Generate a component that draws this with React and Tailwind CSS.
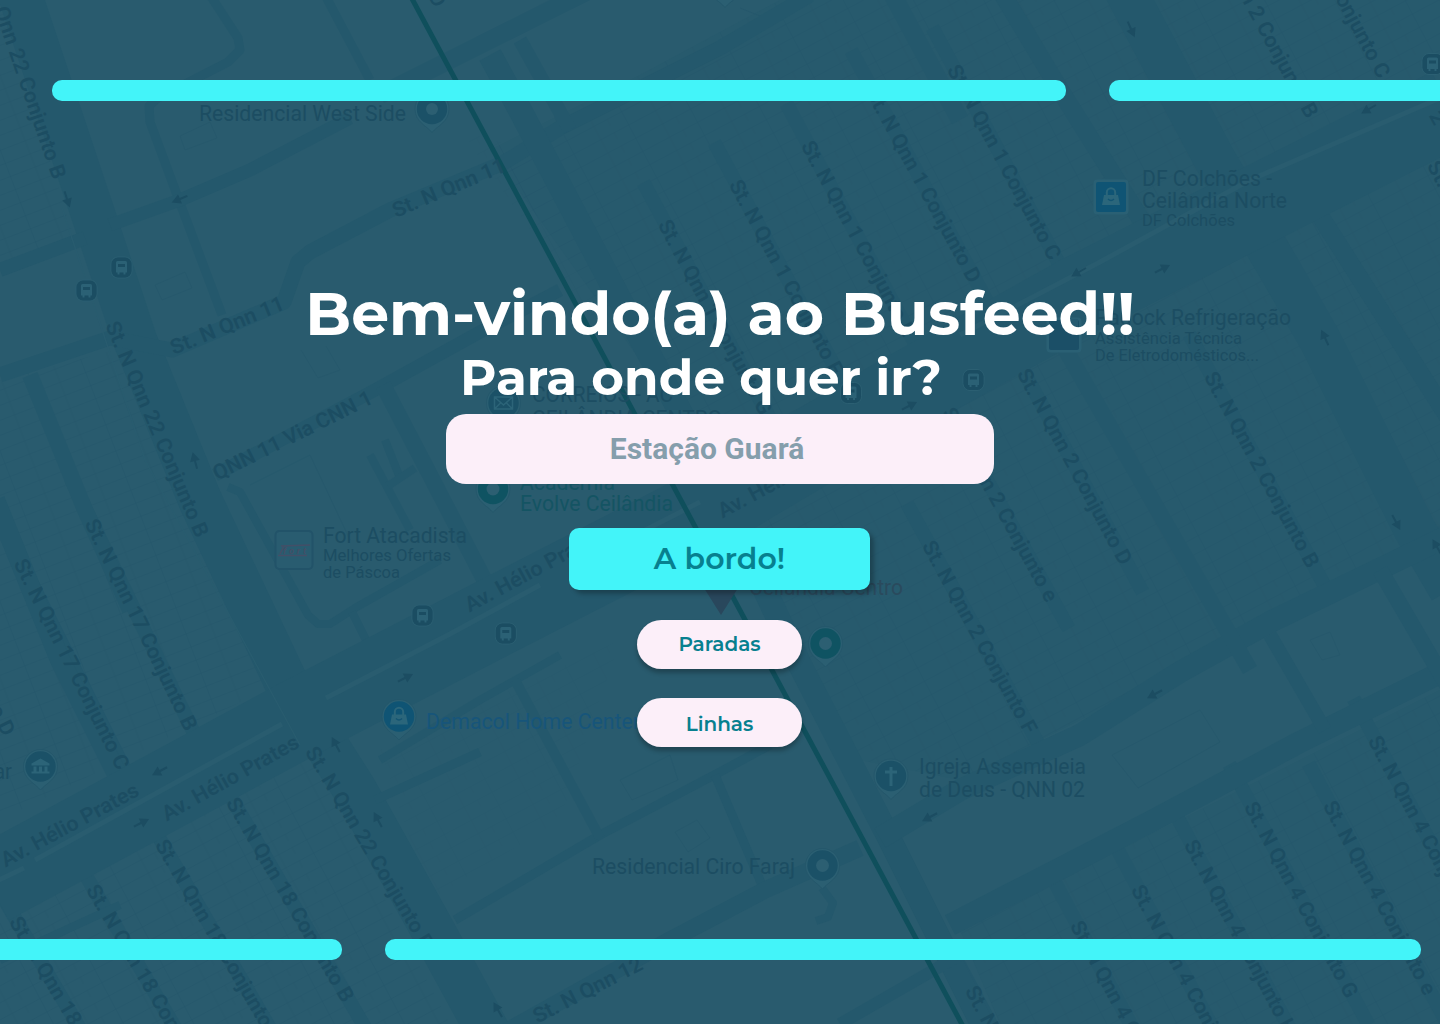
import React from "react";

const BLOCK = "#295b6e";
const ROAD = "#24586c";
const INK = "#1c4d62";
const PIN = "#1b5167";

// [points, width]
const ROADS = [
  ["15,-20 75,160 135,340 200,500 285,680 355,790 430,925 490,1035", 44],
  ["0,270 85,238", 14],
  ["210,-5 238,38 240,50 228,62 158,98 149,106 150,122 180,203 222,315", 9],
  ["325,-5 370,80", 9],
  ["110,225 180,200 250,170 350,118", 13],
  ["0,375 110,338 172,350 284,302 298,262 310,252 390,210 503,163 560,128 640,88 720,48 810,-5", 15],
  ["380,95 480,45 590,-10", 18],
  ["490,55 520,110 620,300 690,430 800,665 885,830 985,1030", 24],
  ["520,40 570,130", 14],
  ["1125,-10 1215,160 1280,270 1320,340 1415,530 1450,590", 42],
  ["1000,-10 1060,90 1160,250", 18],
  ["890,-10 960,120", 18],
  ["215,475 375,390 480,332 560,290", 13],
  ["383,385 430,475 500,610", 16],
  ["228,487 240,492 308,615 318,624 330,624 355,608 440,560", 8],
  ["370,455 410,530", 8],
  ["385,440 400,478", 8],
  ["388,486 415,468", 8],
  ["352,612 366,640", 8],
  ["30,375 85,510 130,610", 16],
  ["-5,500 60,660 130,800", 20],
  ["375,800 480,752", 9],
  ["455,920 600,835 720,772 770,745", 9],
  ["380,760 480,700 560,655", 8],
  ["515,680 600,838", 10],
  ["715,775 765,892", 9],
  ["500,1035 670,940 765,890 860,848", 17],
  ["822,888 833,903 828,917 816,921", 8],
  ["840,1024 960,955", 12],
  ["880,838 960,790 1080,735 1180,672 1270,622 1450,535", 22],
  ["950,925 1150,822 1300,742 1450,668", 22],
  ["1270,635 1325,730", 14],
  ["1380,570 1450,690", 16],
  ["1310,200 1450,420", 18],
  ["1060,340 1250,670", 16],
  ["0,960 120,905", 8],
];

// Street names written along their road: [x1, y1, x2, y2, name, draws its own road]
const STREETS = [
  [664, 221, 767, 413, "St. N Qnn 1 Conjunto G", 1],
  [735, 181, 838, 373, "St. N Qnn 1 Conjunto F", 1],
  [807, 142, 910, 334, "St. N Qnn 1 Conjunto E", 1],
  [872, 89, 976, 281, "St. N Qnn 1 Conjunto D", 1],
  [953, 66, 1056, 258, "St. N Qnn 1 Conjunto C", 1],
  [1208, -78, 1313, 116, "St. N Qnn 2 Conjunto B", 0],
  [1281, -118, 1385, 76, "St. N Qnn 2 Conjunto C", 0],
  [1435, 112, 1441, 123, "2", 0],
  [1433, 162, 1536, 354, "St. N Qnn 4 Conjunto B", 0],
  [338, -187, 441, 5, "St. N Qnn 11 Conjunto D", 0],
  [1023, 370, 1127, 563, "St. N Qnn 2 Conjunto D", 1],
  [1210, 373, 1314, 566, "St. N Qnn 2 Conjunto B", 1],
  [948, 409, 1053, 600, "St. N Qnn 2 Conjunto e", 1],
  [928, 542, 1032, 732, "St. N Qnn 2 Conjunto F", 1],
  [-16, -43, 60, 178, "St. N Qnn 22 Conjunto B", 0],
  [112, 322, 203, 536, "St. N Qnn 22 Conjunto B", 0],
  [91, 520, 192, 729, "St. N Qnn 17 Conjunto B", 1],
  [20, 560, 124, 768, "St. N Qnn 17 Conjunto C", 1],
  [-97, 524, 10, 734, "St. N Qnn 17 Conjunto D", 0],
  [311, 748, 429, 947, "St. N Qnn 22 Conjunto B", 0],
  [232, 799, 349, 1000, "St. N Qnn 18 Conjunto B", 1],
  [161, 841, 278, 1042, "St. N Qnn 18 Conjunto C", 1],
  [92, 886, 210, 1087, "St. N Qnn 18 Conjunto D", 1],
  [15, 918, 133, 1119, "St. N Qnn 18 Conjunto e", 1],
  [1374, 737, 1476, 928, "St. N Qnn 4 Conjunto D", 1],
  [1250, 803, 1353, 996, "St. N Qnn 4 Conjunto G", 1],
  [1329, 802, 1431, 993, "St. N Qnn 4 Conjunto e", 1],
  [1190, 841, 1292, 1033, "St. N Qnn 4 Conjunto H", 1],
  [1137, 886, 1239, 1077, "St. N Qnn 4 Conjunto I", 1],
  [1076, 922, 1178, 1113, "St. N Qnn 4 Conjunto J", 1],
  [971, 987, 1073, 1178, "St. N Qnn 4 Conjunto L", 1],
  [2, 861, 137, 788, "Av. Hélio Prates", 0],
  [163, 815, 297, 740, "Av. Hélio Prates", 0],
  [466, 606, 601, 533, "Av. Hélio Prates", 0],
  [719, 512, 854, 439, "Av. Hélio Prates", 0],
  [393, 211, 504, 164, "St. N Qnn 11", 0],
  [171, 348, 283, 302, "St. N Qnn 11", 0],
  [214, 474, 371, 396, "QNN 11 Via CNN 1", 0],
  [534, 1017, 641, 962, "St. N Qnn 12", 0],
];

// [x, baseline, width, size, text, colour]
const PLACES = [
  [199, 121, 207, 21.5, "Residencial West Side", INK],
  [1142, 186, 130, 21.5, "DF Colchões -", INK],
  [1142, 208, 145, 21.5, "Ceilândia Norte", INK],
  [1142, 226, 93, 16.5, "DF Colchões", INK],
  [1095, 325, 196, 21.5, "Padock Refrigeração", INK],
  [1095, 344, 147, 16.5, "Assistência Técnica", INK],
  [1095, 361, 164, 16.5, "De Eletrodomésticos...", INK],
  [532, 402, 141, 21.5, "CORREIOS - AC", INK],
  [532, 426, 190, 21.5, "CEILÂNDIA CENTRO", INK],
  [520, 490, 95, 21.5, "Academia", "#145463"],
  [520, 511, 153, 21.5, "Evolve Ceilândia", "#145463"],
  [323, 543, 144, 21.5, "Fort Atacadista", INK],
  [323, 561, 128, 16.5, "Melhores Ofertas", INK],
  [323, 578, 77, 16.5, "de Páscoa", INK],
  [749, 595, 154, 21.5, "Ceilândia Centro", "#2a4a5d"],
  [426, 729, 214, 21.5, "Demacol Home Center", "#17557a"],
  [919, 774, 167, 21.5, "Igreja Assembleia", INK],
  [919, 797, 166, 21.5, "de Deus - QNN 02", INK],
  [592, 874, 203, 21.5, "Residencial Ciro Faraj", INK],
  [-6, 779, 18, 21.5, "ar", INK],
];

const BUS_STOPS = [[121.5, 267.5], [86.5, 290.5], [422.5, 615.5], [505.8, 633.5], [973.5, 380], [851, 393], [1432.5, 64]];

// [x, y, angle]
const ARROWS = [
  [67, 199, 72], [180, 199, 157], [1131, 29, 66], [1369, 109, 150], [1079, 272, 150],
  [1162, 269, -27], [1325, 338, 245], [1396, 522, 62], [1437, 547, 240], [195, 461, 255],
  [405, 678, -27], [160, 771, 152], [141, 823, -27], [336, 745, 242], [378, 820, 242],
  [1155, 694, 152], [930, 817, 152], [909, 406, -27], [498, 1010, 240],
];

function Pin({ x, y, fill = PIN, children }) {
  return (
    <g transform={`translate(${x} ${y})`}>
      <path d="M0 23.500C-5 17-17 13-17 0A17 17 0 1 1 17 0C17 13 5 17 0 23.500Z" fill="#2b5f72" stroke="#235569" strokeWidth="0.8" />
      <circle r="15.2" fill={fill} />
      {children}
    </g>
  );
}

function Bag() {
  return (
    <g>
      <path d="M-7-2H7L9 8H-9Z" fill="#2b667b" />
      <path d="M-4.200-1V-4.500a4.200 4.200 0 0 1 8.400 0V-1" fill="none" stroke="#2b667b" strokeWidth="2" />
      <path d="M-3 2Q0 5 3 2" fill="none" stroke="#125472" strokeWidth="1.4" />
    </g>
  );
}

function CityMap() {
  return (
    <svg aria-hidden="true" className="absolute inset-0 h-full w-full" viewBox="0 0 1440 1024" fontFamily="Roboto, sans-serif">
      <defs>
        <pattern id="lots" width="62" height="15" patternUnits="userSpaceOnUse" patternTransform="rotate(-28)">
          <path d="M0 .5H62M.5 0V15M31 0V15M46 0V8" fill="none" stroke="#23556a" strokeWidth="1" opacity="0.38" />
        </pattern>
        <pattern id="lotsWest" width="54" height="14" patternUnits="userSpaceOnUse" patternTransform="rotate(-21)">
          <path d="M0 .5H54M.5 0V14M27 0V14" fill="none" stroke="#23556a" strokeWidth="1" opacity="0.38" />
        </pattern>
      </defs>
      <rect width="1440" height="1024" fill={BLOCK} />
      <path d="M490 150 640 75 780 0H1440V530L1180 670 960 780 860 760 690 430Z" fill="#275a6d" />
      <path d="M960 930 1440 690V1024H1000Z" fill="#275a6d" />
      <path d="M490 150 640 75 780 0H1440V530L1180 670 960 780 860 760 690 430Z" fill="url(#lots)" />
      <path d="M960 930 1440 690V1024H1000Z" fill="url(#lots)" />
      <path d="M0 0 75 240 0 265ZM0 380 115 350 265 690 0 820Z" fill="url(#lotsWest)" />
      <path d="M0 920 310 755 450 1024H0Z" fill="url(#lots)" />
      <path d="M460 130 560 160 640 330 600 330ZM380 750 620 640 560 820 430 900Z" fill="url(#lots)" opacity="0.45" />
      <g fill="none" stroke="#24566a" opacity="0.6">
        <path d="M180 136 210 122 217 138 185 150ZM155 285 185 272 192 288 162 300ZM301 350 318 378 340 370 326 346M620 780 670 755 678 780 632 800ZM675 832 697 820 710 838 688 852ZM1112 755 1200 710 1220 742 1138 788ZM1310 640 1330 632 1340 655 1322 660ZM740 8 770 20 775 8M250 485 310 455 350 540" />
      </g>
      <g fill="none" stroke={ROAD} strokeLinejoin="round">
        {STREETS.filter((s) => s[5]).map(([x1, y1, x2, y2], i) => (
          <line key={i} x1={x1 - (x2 - x1) * 0.2} y1={y1 - (y2 - y1) * 0.2} x2={x2 + (x2 - x1) * 0.15} y2={y2 + (y2 - y1) * 0.15} strokeWidth="14" />
        ))}
        {ROADS.map(([points, width], i) => (
          <polyline key={i} points={points} strokeWidth={width} />
        ))}
        <polyline points="-10,885 300,718 480,625 720,502 900,395 1080,295 1450,108" strokeWidth="80" />
      </g>
      <g fill="none" stroke="#295c6f" strokeWidth="5">
        <path d="M-5 882 24 868M35 860 282 724M326 698 450 634 540 585M575 566 700 502M960 335 1100 262 1250 180 1440 98" />
        <path d="M62 208 145 460 300 745" strokeWidth="1.2" />
      </g>
      <path d="M410-5 965 1030" stroke="#0f4f5c" strokeWidth="5" />
      <g fill={INK} fontWeight="600">
        {STREETS.map(([x1, y1, x2, y2, name], i) => (
          <text
            key={i}
            fontSize="21"
            dy="7.5"
            textLength={Math.hypot(x2 - x1, y2 - y1)}
            lengthAdjust="spacingAndGlyphs"
            transform={`translate(${x1} ${y1}) rotate(${(Math.atan2(y2 - y1, x2 - x1) * 180) / Math.PI})`}
          >
            {name}
          </text>
        ))}
      </g>
      {ARROWS.map(([x, y, a], i) => (
        <path key={i} d="M-8-1H0V-5L9 0 0 5V1H-8Z" fill={INK} transform={`translate(${x} ${y}) rotate(${a})`} />
      ))}
      {BUS_STOPS.map(([x, y], i) => (
        <g key={i} transform={`translate(${x} ${y})`}>
          <rect x="-10.5" y="-10.5" width="21" height="21" rx="7" fill="none" stroke="#2b5f72" />
          <rect x="-10" y="-10" width="20" height="20" rx="6.5" fill="#1b4d62" />
          <path d="M-5.500-5Q-5.500-6.500-4-6.500H4Q5.500-6.500 5.500-5V5H4V7H2V5H-2V7H-4V5H-5.500Z" fill="#2b6175" />
          <path d="M-3.500-3.500H3.500V-.5H-3.500Z" fill="#1b4d62" />
        </g>
      ))}
      {PLACES.map(([x, y, width, size, text, fill], i) => (
        <text key={i} x={x} y={y} fontSize={size} textLength={width} lengthAdjust="spacingAndGlyphs" fill={fill}>
          {text}
        </text>
      ))}
      <Pin x={432} y={109}><circle r="6" fill="#2c5f72" /></Pin>
      <Pin x={822.5} y={865.5}><circle r="6.5" fill="#2c5f72" /></Pin>
      <Pin x={825.5} y={643.5} fill="#0f5362"><circle r="6.5" fill="#2c5f72" /></Pin>
      <Pin x={493} y={489} fill="#0f5362"><circle r="6.5" fill="#2c5f72" /></Pin>
      <Pin x={725} y={-16} />
      <Pin x={399} y={716.5} fill="#0f5474"><Bag /></Pin>
      <Pin x={891} y={776}><path d="M0-9V10M-6-4H6" stroke="#2c6478" strokeWidth="3" /></Pin>
      <Pin x={40.5} y={766.5}>
        <path d="M-9-3 0-8 9-3V-1H-9ZM-7 0H-4V5H-7ZM-1.500 0H1.500V5H-1.500ZM4 0H7V5H4ZM-9 5H9V7H-9Z" fill="#2c6478" />
      </Pin>
      <Pin x={503.5} y={403}>
        <path d="M-9-6H9V6H-9ZM-9-6 0 2 9-6M-9 6-3 0M9 6 3 0" fill="none" stroke="#2c6478" strokeWidth="1.5" />
      </Pin>
      <g transform="translate(1111 197)">
        <rect x="-17.5" y="-17.5" width="35" height="35" rx="4" fill="#2a6074" />
        <rect x="-15" y="-15" width="30" height="30" rx="2" fill="#0f5474" />
        <Bag />
      </g>
      <g transform="translate(1064 335)">
        <rect x="-17.5" y="-17.5" width="35" height="35" rx="4" fill="#2a6074" />
        <rect x="-15" y="-15" width="30" height="30" rx="2" fill="#1b4f67" />
        <path d="M-1-16H14V-6H2Z" fill="#255a70" />
      </g>
      <g transform="translate(294 550)">
        <rect x="-18.5" y="-19" width="37" height="38" rx="4" fill="#295c70" stroke="#225369" strokeWidth="2" />
        <path d="M-13-4 16-5M-16 5.500H13M-14 4-10-4" stroke="#434f67" strokeWidth="1.6" />
        <text x="-11" y="4" fontSize="9" fontStyle="italic" fontWeight="700" textLength="23" fill="#434f67">fort</text>
      </g>
      <path d="M704 588H738L721 615Z" fill="#29475c" />
    </svg>
  );
}

function Dash({ className }) {
  return <div className={`h-[21px] rounded-[10px] bg-[#43f4f9] ${className}`} />;
}

export default function App() {
  return (
    <main className="relative h-[1024px] w-[1440px] overflow-hidden bg-[#295b6e] font-[Montserrat,Inter,sans-serif]">
      <CityMap />
      <div className="relative flex h-full flex-col items-center pt-20">
        <div className="flex w-full gap-[43px] pl-[52px]">
          <Dash className="w-[1014px] shrink-0" />
          <Dash className="grow rounded-r-none" />
        </div>

        <h1 className="mt-[173px] flex h-20 items-center justify-center whitespace-nowrap text-[60px] font-bold leading-none text-white">
          Bem-vindo(a) ao Busfeed!!
        </h1>
        <h2 className="mr-[38px] flex h-[60px] items-center justify-center whitespace-nowrap pb-3 text-[50px] font-bold leading-none text-white">
          Para onde quer ir?
        </h2>

        <input
          aria-label="Destino"
          placeholder="Estação Guará"
          className="h-[70px] w-[548px] rounded-[20px] bg-[#fceff9] pb-[2px] pr-[26px] text-center font-[Roboto,sans-serif] text-[30px] font-bold outline-none placeholder:text-[#859eac] placeholder:opacity-100"
        />

        <button className="mt-[44px] mr-px h-[62px] w-[301px] rounded-[10px] bg-[#43f4f9] pb-[2px] text-[30px] font-semibold text-[#07808f] shadow-[4px_4px_4px_rgba(0,0,0,0.25)]">
          A bordo!
        </button>
        <button className="mt-[30px] mr-px h-[49px] w-[165px] rounded-full bg-[#fceff9] pb-[2px] text-[20px] font-semibold text-[#07808f] shadow-[0_4px_4px_rgba(0,0,0,0.25)]">
          Paradas
        </button>
        <button className="mt-[29px] mr-px h-[49px] w-[165px] rounded-full bg-[#fceff9] pt-[2px] text-[20px] font-semibold text-[#07808f] shadow-[0_4px_4px_rgba(0,0,0,0.25)]">
          Linhas
        </button>

        <div className="mt-[192px] flex w-full gap-[43px]">
          <Dash className="w-[342px] shrink-0 rounded-l-none" />
          <Dash className="w-[1036px] shrink-0" />
        </div>
      </div>
    </main>
  );
}
